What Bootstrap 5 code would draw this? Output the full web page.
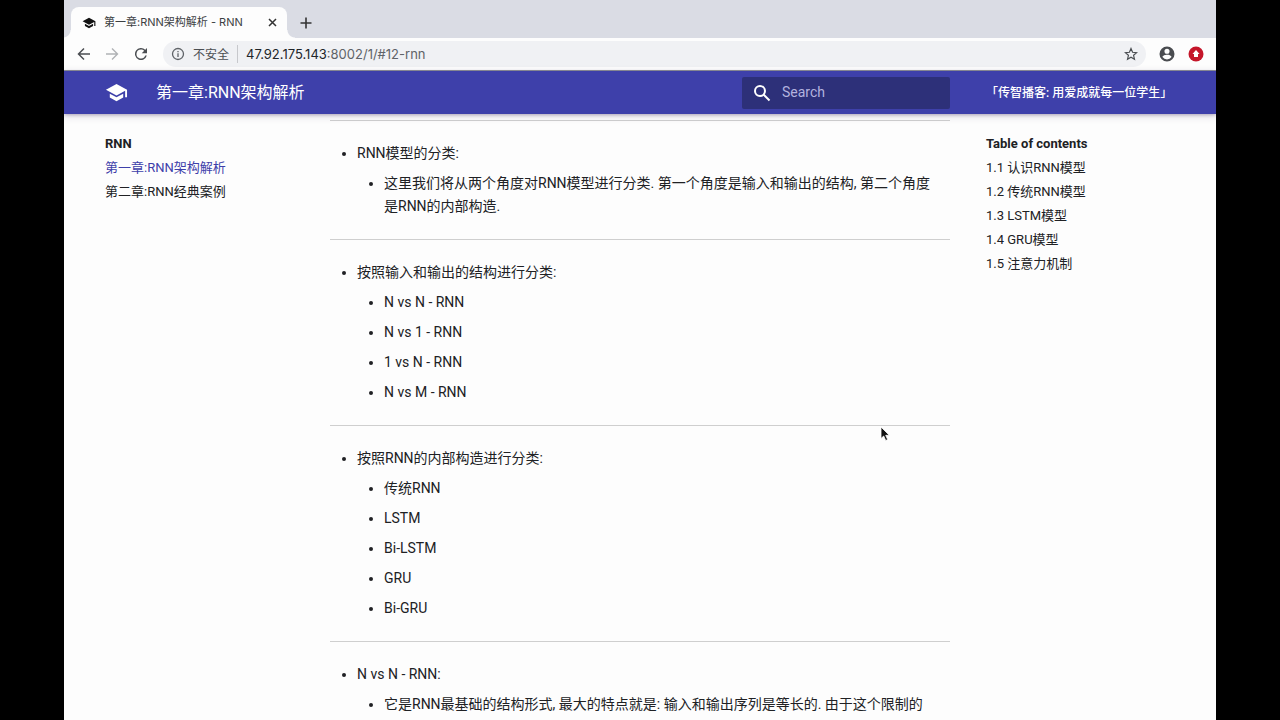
<!DOCTYPE html>
<html lang="zh-CN">
<head>
<meta charset="utf-8">
<meta name="viewport" content="width=device-width, initial-scale=1">
<title>第一章:RNN架构解析 - RNN</title>
<link href="https://cdn.jsdelivr.net/npm/bootstrap@5.3.0/dist/css/bootstrap.min.css" rel="stylesheet">
<style>
body { background: #000; color: #202124; font-family: Roboto, "Noto Sans CJK SC", sans-serif; font-size: 14px; line-height: 23px; padding: 0 5%; }
button { border: 0; background: none; padding: 0; color: inherit; display: flex; align-items: center; justify-content: center; }
svg { display: block; flex: none; }
a { color: inherit; text-decoration: none; }
.browser { background: #fdfdfd; }
.chrome-font { font-family: Inter, "Noto Sans CJK SC", sans-serif; }
.tabstrip { background: #dadce4; height: 38px; padding: 7px 8px 0 7px; }
.tab { position: relative; background: #fdfdfd; width: 216px; height: 31px; border-radius: 8px 8px 0 0; padding: 0 8px 0 11px; font-size: 11px; color: #3c4043; }
.tab::before, .tab::after { content: ""; position: absolute; bottom: 0; width: 8px; height: 8px; }
.tab::before { left: -8px; background: radial-gradient(circle at 0 0, transparent 7px, #fdfdfd 8px); }
.tab::after { right: -8px; background: radial-gradient(circle at 100% 0, transparent 7px, #fdfdfd 8px); }
.toolbar { height: 33px; padding: 0 12px; border-bottom: 1px solid #8f9399; color: #4b4e52; }
.omnibox { height: 26px; border-radius: 13px; background: #f0f1f4; margin-left: 13px; padding: 0 8px; font-size: 12px; }
.omnibox .address { font-size: 13px; color: #5f6368; }
.masthead { background: #3e40aa; color: #fff; height: 43px; box-shadow: 0 1px 3px rgba(60,40,90,.3), 0 2px 8px rgba(60,40,90,.18); z-index: 2; }
.side { width: 266px; padding-left: 41px; }
.toc { width: 266px; padding-left: 36px; }
.side, .toc { flex: none; font-size: 13px; line-height: 24px; }
.sidebar { padding-top: 18px; }
.site-title { font-size: 16px; }
.search { width: 208px; height: 32px; border-radius: 2px; background: #2d3079; padding: 0 11px; gap: 11px; }
.search input { border: 0; background: none; outline: 0; padding: 0; color: #fff; font-size: 14px; min-width: 0; }
.search input::placeholder { color: #b3b3df; opacity: 1; }
.slogan { font-size: 12px; font-weight: 500; }
.current { color: #3e40aa; }
.article { padding-top: 6px; min-width: 0; }
.article hr { margin: 0 0 21px; border-top: 1px solid #cfcfcf; opacity: 1; }
.article ul { margin: 0; padding-left: 27px; }
.article > ul { margin-bottom: 21px; }
.article ul ul li, .article ul ul { margin-top: 7px; }
.article ul ul li:first-child { margin-top: 0; }
.article li { list-style: disc; }
.pointer { position: absolute; left: 880px; top: 426px; z-index: 5; }
</style>
<script src="https://cdn.jsdelivr.net/npm/bootstrap@5.3.0/dist/js/bootstrap.bundle.min.js"></script>
</head>
<body class="vh-100 overflow-hidden">
<div class="browser d-flex flex-column h-100 overflow-hidden">
  <div class="tabstrip chrome-font d-flex flex-shrink-0">
    <div class="tab d-flex align-items-center">
      <svg class="me-2" width="14" height="14" viewBox="0 0 24 24" fill="#111"><path d="M12 3 1 9l11 6 9-4.900V17h2V9M5 13.200v4L12 21l7-3.800v-4L12 17z"/></svg>
      <span class="flex-grow-1 text-nowrap">第一章:RNN架构解析 - RNN</span>
      <button type="button" aria-label="关闭标签页"><svg width="13" height="13" viewBox="0 0 13 13" stroke="#333" stroke-width="1.500"><path d="M3 3l7 7M10 3l-7 7"/></svg></button>
    </div>
    <button class="ms-2 px-1" type="button" aria-label="新标签页"><svg width="14" height="14" viewBox="0 0 14 14" stroke="#333" stroke-width="1.600"><path d="M7 1.500v11M1.500 7h11"/></svg></button>
  </div>
  <div class="toolbar chrome-font d-flex align-items-center flex-shrink-0">
    <button type="button" aria-label="后退"><svg width="16" height="16" viewBox="0 0 16 16" fill="none" stroke="currentColor" stroke-width="1.500"><path d="M14 8H3M8 2.500 2.500 8 8 13.500"/></svg></button>
    <button class="ms-2 ps-1" type="button" aria-label="前进"><svg width="16" height="16" viewBox="0 0 16 16" fill="none" stroke="#b0b2b5" stroke-width="1.400"><path d="M2 8h11M8 2.500 13.500 8 8 13.500"/></svg></button>
    <button class="ms-2 ps-1" type="button" aria-label="重新加载"><svg width="18" height="18" viewBox="0 0 24 24" fill="currentColor"><path d="M17.650 6.350A8 8 0 1 0 19.730 14h-2.080A6 6 0 1 1 12 6c1.660 0 3.140.69 4.220 1.780L13 11h7V4z"/></svg></button>
    <div class="omnibox d-flex align-items-center flex-grow-1">
      <svg width="14" height="14" viewBox="0 0 14 14" fill="none" stroke="#5f6368" stroke-width="1.300"><circle cx="7" cy="7" r="5.500"/><path d="M7 6.300v3.700M7 4v1.300"/></svg>
      <span class="ms-2">不安全</span>
      <span class="vr my-1 mx-2"></span>
      <a href="#12-rnn" class="address flex-grow-1"><span class="text-dark">47.92.175.143</span>:8002/1/#12-rnn</a>
      <button type="button" aria-label="收藏"><svg width="14" height="14" viewBox="0 0 24 24" fill="none" stroke="currentColor" stroke-width="2"><path d="m12 2.500 2.700 6.500 7 .600-5.300 4.600 1.600 6.900-6-3.700-6 3.700 1.600-6.900L2.300 9.600l7-.600z"/></svg></button>
    </div>
    <button class="ms-2 ps-1" type="button" aria-label="用户"><svg width="18" height="18" viewBox="0 0 24 24" fill="#4a4c50"><path fill-rule="evenodd" d="M12 2a10 10 0 1 0 0 20 10 10 0 0 0 0-20zm0 3a3.400 3.400 0 1 1 0 6.800A3.400 3.400 0 0 1 12 5zm0 14.200a7.200 7.200 0 0 1-6-3.200c0-2 4-3.100 6-3.100s6 1.100 6 3.100a7.200 7.200 0 0 1-6 3.200z"/></svg></button>
    <button class="ms-2 ps-1" type="button" aria-label="更新"><svg width="16" height="16" viewBox="0 0 16 16"><circle cx="8" cy="8" r="7.500" fill="#c5162a"/><path d="M8 4 4.500 8h1.500v3h4V8h1.500z" fill="#fff"/></svg></button>
  </div>

  <header class="masthead d-flex align-items-center flex-shrink-0">
    <div class="side d-flex align-items-center flex-grow-1">
      <a href="#" aria-label="RNN"><svg width="23" height="23" viewBox="0 0 24 24" fill="#fff"><path d="M12 3 1 9l11 6 9-4.910V17h2V9M5 13.180v4L12 21l7-3.820v-4L12 17z"/></svg></a>
      <span class="site-title ms-4 ps-1">第一章:RNN架构解析</span>
    </div>
    <label class="search d-flex align-items-center">
      <svg width="18" height="18" viewBox="0 0 18 18" fill="none" stroke="#fff" stroke-width="2"><circle cx="7" cy="7" r="5"/><path d="m10.500 10.500 6 6"/></svg>
      <input class="flex-grow-1" type="text" placeholder="Search" aria-label="Search">
    </label>
    <div class="toc"><a class="slogan" href="#">「传智播客: 用爱成就每一位学生」</a></div>
  </header>

  <div class="d-flex flex-grow-1 overflow-hidden">
    <nav class="side sidebar" aria-label="RNN">
      <div class="fw-bold">RNN</div>
      <a class="d-block current" href="#1">第一章:RNN架构解析</a>
      <a class="d-block" href="#2">第二章:RNN经典案例</a>
    </nav>
    <main class="article flex-grow-1">
      <hr>
      <ul><li>RNN模型的分类:
        <ul><li>这里我们将从两个角度对RNN模型进行分类. 第一个角度是输入和输出的结构, 第二个角度<br>是RNN的内部构造.</li></ul></li></ul>
      <hr>
      <ul><li>按照输入和输出的结构进行分类:
        <ul><li>N vs N - RNN</li><li>N vs 1 - RNN</li><li>1 vs N - RNN</li><li>N vs M - RNN</li></ul></li></ul>
      <hr>
      <ul><li>按照RNN的内部构造进行分类:
        <ul><li>传统RNN</li><li>LSTM</li><li>Bi-LSTM</li><li>GRU</li><li>Bi-GRU</li></ul></li></ul>
      <hr>
      <ul><li>N vs N - RNN:
        <ul><li>它是RNN最基础的结构形式, 最大的特点就是: 输入和输出序列是等长的. 由于这个限制的</li></ul></li></ul>
    </main>
    <nav class="toc sidebar" aria-label="Table of contents">
      <div class="fw-bold">Table of contents</div>
      <a class="d-block" href="#11">1.1 认识RNN模型</a>
      <a class="d-block" href="#12">1.2 传统RNN模型</a>
      <a class="d-block" href="#13">1.3 LSTM模型</a>
      <a class="d-block" href="#14">1.4 GRU模型</a>
      <a class="d-block" href="#15">1.5 注意力机制</a>
    </nav>
  </div>
</div>
<svg class="pointer" width="10" height="16" viewBox="0 0 10 16"><path d="M1 1v11.500l2.700-2.500 2 4.500 2-.900-2-4.300h3.600z" fill="#111" stroke="#fff" stroke-width=".8"/></svg>
</body>
</html>
